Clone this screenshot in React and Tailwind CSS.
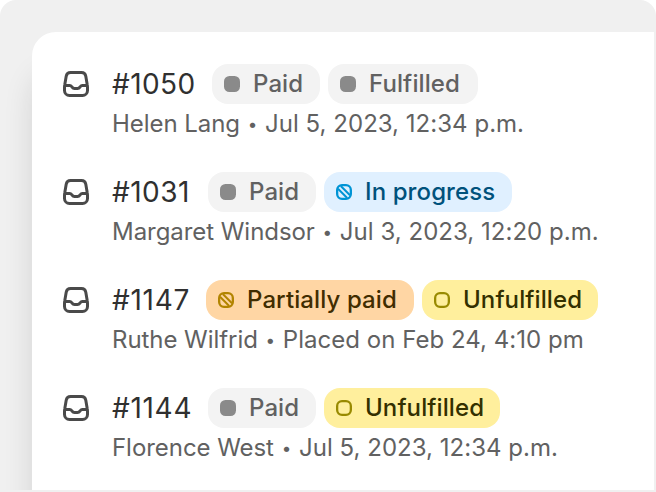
const tones = {
  gray: { box: "bg-[#f3f3f3] text-[#616161]", pip: "#8a8a8a" },
  blue: { box: "bg-[#e0f0ff] text-[#00527c]", pip: "#0094d5" },
  orange: { box: "bg-[#ffd6a4] text-[#412d00]", pip: "#b28400" },
  yellow: { box: "bg-[#ffef9d] text-[#333000]", pip: "#998a00" },
};

const orders = [
  {
    id: "#1050",
    customer: "Helen Lang",
    date: "Jul 5, 2023, 12:34 p.m.",
    badges: [
      { label: "Paid", tone: "gray", fill: "solid", width: "w-[108px]" },
      { label: "Fulfilled", tone: "gray", fill: "solid", width: "w-[150px]" },
    ],
    offset: "w-[100px] tracking-[0.4px]",
  },
  {
    id: "#1031",
    customer: "Margaret Windsor",
    date: "Jul 3, 2023, 12:20 p.m.",
    badges: [
      { label: "Paid", tone: "gray", fill: "solid", width: "w-[108px]" },
      { label: "In progress", tone: "blue", fill: "partial", width: "w-[188px]" },
    ],
    offset: "w-[96px] tracking-[0.5px]",
  },
  {
    id: "#1147",
    customer: "Ruthe Wilfrid",
    date: "Placed on Feb 24, 4:10 pm",
    badges: [
      { label: "Partially paid", tone: "orange", fill: "partial", width: "w-[208px]" },
      { label: "Unfulfilled", tone: "yellow", fill: "empty", width: "w-[176px]" },
    ],
    offset: "w-[94px] tracking-[0.75px]",
  },
  {
    id: "#1144",
    customer: "Florence West",
    date: "Jul 5, 2023, 12:34 p.m.",
    badges: [
      { label: "Paid", tone: "gray", fill: "solid", width: "w-[108px]" },
      { label: "Unfulfilled", tone: "yellow", fill: "empty", width: "w-[176px]" },
    ],
    offset: "w-[96px] tracking-[0.7px]",
  },
];

function InboxIcon() {
  return (
    <svg className="h-10 w-12 shrink-0" viewBox="0 0 48 40" fill="none" stroke="#4a4a4a" strokeWidth="3" strokeLinejoin="round">
      <path d="M8.600 8.500H19.400C21.600 8.500 23.400 10 23.800 12.200L25.200 20.500C25.400 21.500 25.500 22.500 25.500 23.500V26.500A5 5 0 0 1 20.500 31.500H7.500A5 5 0 0 1 2.500 26.500V23.500C2.500 22.500 2.600 21.500 2.800 20.500L4.200 12.200C4.600 10 6.400 8.500 8.600 8.500Z" />
      <path d="M2.500 21.500H7.700Q8.900 21.500 9.600 22.500L10.100 23.200Q11 24.500 12.500 24.500H15.500Q17 24.500 17.900 23.200L18.400 22.500Q19.100 21.500 20.300 21.500H25.500" />
    </svg>
  );
}

function Pip({ color, fill }) {
  return (
    <svg className="size-4 shrink-0" viewBox="0 0 16 16" fill="none">
      {fill === "solid" ? (
        <rect width="16" height="16" rx="5.500" fill={color} />
      ) : (
        <rect x="1.150" y="1.150" width="13.700" height="13.700" rx="4.850" stroke={color} strokeWidth="2.300" />
      )}
      {fill === "partial" && (
        <path d="M2 4.800L11.200 14M4.800 2L14 11.200" stroke={color} strokeWidth="2" />
      )}
    </svg>
  );
}

function Badge({ label, tone, fill, width }) {
  return (
    <span className={`flex h-10 shrink-0 items-center gap-[13px] rounded-2xl pl-3 ${width} ${tones[tone].box}`}>
      <Pip color={tones[tone].pip} fill={fill} />
      <span className="whitespace-nowrap text-[24px] font-[550] leading-10 tracking-[0.1px]">{label}</span>
    </span>
  );
}

function OrderRow({ order }) {
  return (
    <li className="flex h-[108px]">
      <div className="w-[50px] shrink-0">
        <InboxIcon />
      </div>
      <div>
        <div className="flex items-center">
          <span className={`shrink-0 text-[28px] leading-10 text-[#303030] ${order.offset}`}>{order.id}</span>
          <div className="flex gap-2">
            {order.badges.map((badge) => (
              <Badge key={badge.label} {...badge} />
            ))}
          </div>
        </div>
        <p className="flex whitespace-nowrap text-[24px] leading-10 text-[#616161]">
          <span className="tracking-[-0.05px]">{order.customer}</span>
          <span className="w-[25px] text-center text-[17px] leading-[41px]">•</span>
          <span className="tracking-[0.03px]">{order.date}</span>
        </p>
      </div>
    </li>
  );
}

export default function App() {
  return (
    <div className="h-[492px] w-[656px] overflow-hidden bg-white font-[Inter,sans-serif]">
      <main className="flex h-full flex-col overflow-hidden rounded-t-2xl bg-[#f0f0f0] pt-8">
        <div className="min-h-0 flex-1 overflow-hidden pr-0.5 pl-8 [clip-path:inset(0_2px_0_0)]">
          <ul className="h-[480px] rounded-tl-3xl bg-white pt-8 pl-[30px] shadow-[0_40px_32px_-4px_rgba(26,26,26,0.16)]">
            {orders.map((order) => (
              <OrderRow key={order.id} order={order} />
            ))}
          </ul>
        </div>
        <div className="h-0.5 shrink-0 bg-[#f0f0f0]" />
      </main>
    </div>
  );
}
